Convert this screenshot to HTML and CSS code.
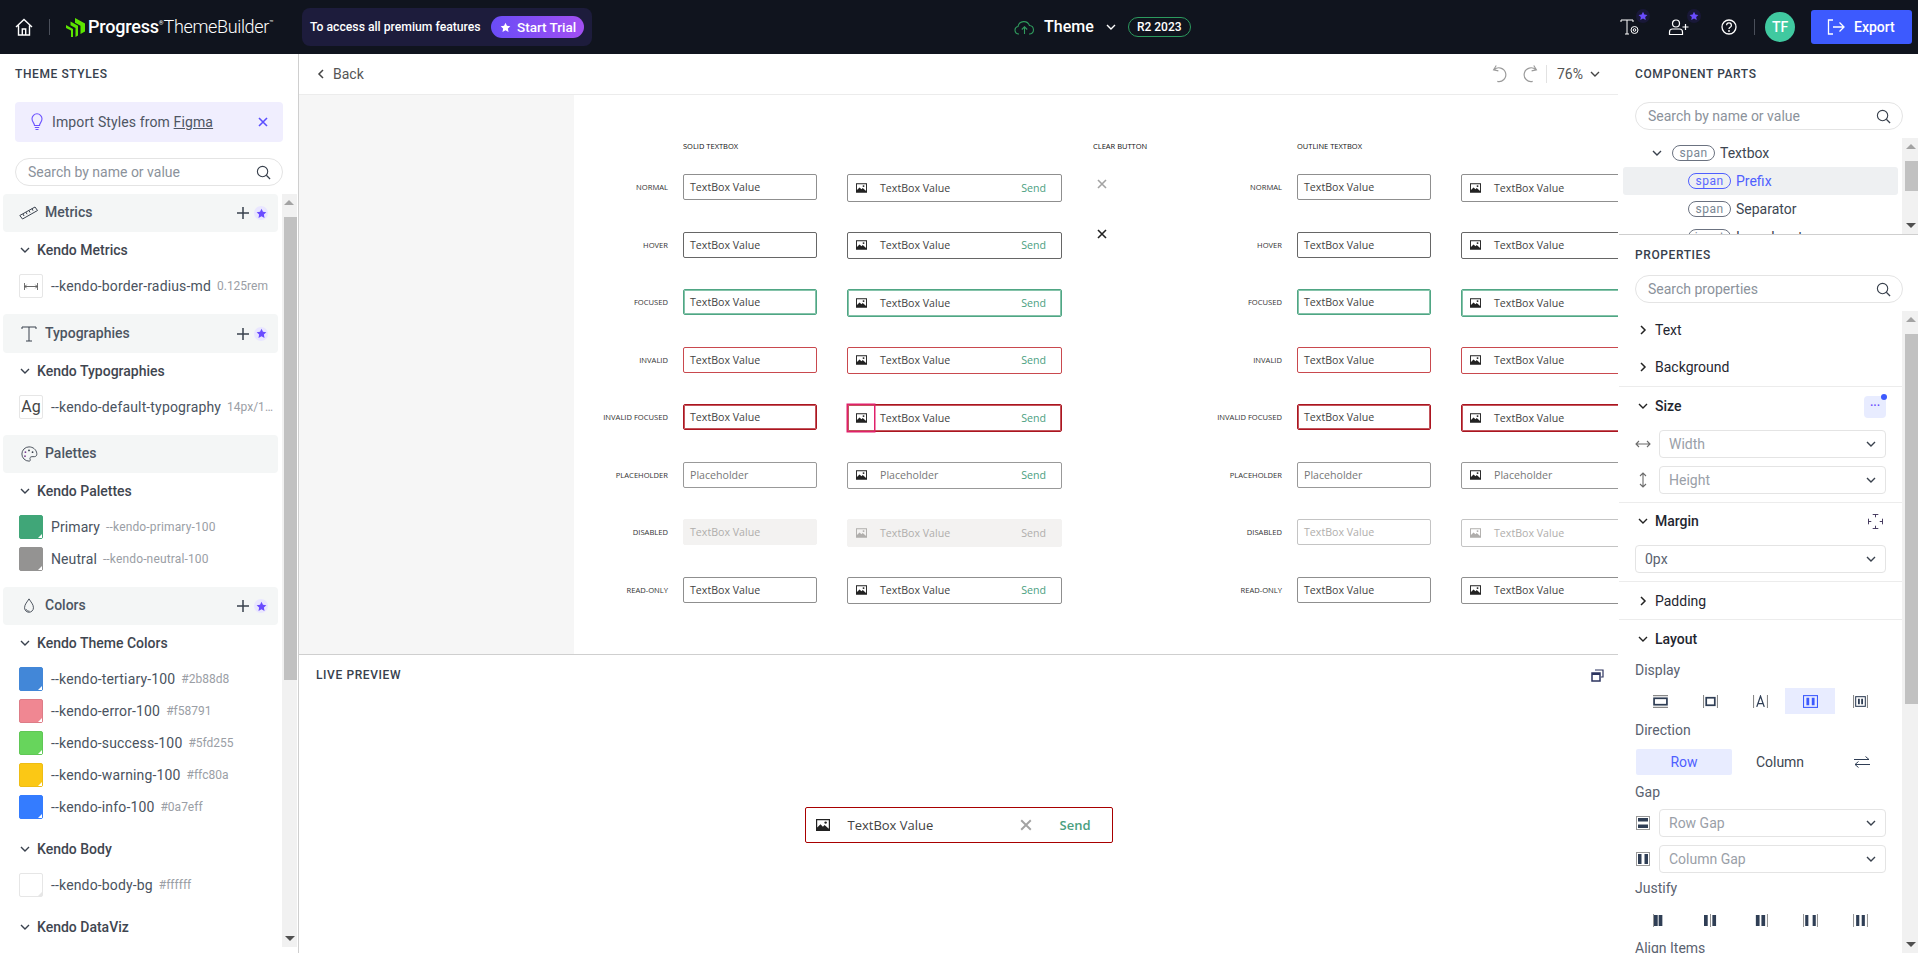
FILE: index.html
```html
<!DOCTYPE html>
<html lang="en">
<head>
<meta charset="utf-8">
<title>Progress ThemeBuilder</title>
<link rel="stylesheet" href="styles.css">
</head>
<body>
<svg class="defs" aria-hidden="true">
  <symbol id="i-img" viewBox="0 0 14 12"><path fill="currentColor" fill-rule="evenodd" d="M0 0h14v12H0zM1.2 1.2v7.3l3.3-3.2 2.4 2.4 1.7-1.6 4.2 3.6V1.2z"/><circle cx="9.6" cy="3.6" r="1.2" fill="currentColor"/></symbol>
  <symbol id="i-x" viewBox="0 0 10 10"><path d="M1 1l8 8M9 1L1 9" fill="none" stroke="currentColor" stroke-width="1.6"/></symbol>
  <symbol id="i-search" viewBox="0 0 16 16"><circle cx="7" cy="7" r="5.5" fill="none" stroke="currentColor" stroke-width="1.2"/><path d="M11 11l4 4" stroke="currentColor" stroke-width="1.4"/></symbol>
  <symbol id="i-down" viewBox="0 0 12 12"><path d="M2 4l4 4 4-4" fill="none" stroke="currentColor" stroke-width="1.4"/></symbol>
  <symbol id="i-right" viewBox="0 0 12 12"><path d="M4 2l4 4-4 4" fill="none" stroke="currentColor" stroke-width="1.5"/></symbol>
  <symbol id="i-star" viewBox="0 0 12 12"><path fill="currentColor" d="M6 .8l1.6 3.4 3.7.5-2.7 2.5.7 3.7L6 9.1l-3.3 1.8.7-3.7L.7 4.7l3.7-.5z"/></symbol>
  <symbol id="i-plus" viewBox="0 0 14 14"><path d="M7 1v12M1 7h12" stroke="currentColor" stroke-width="1.5"/></symbol>
</svg>

<header class="topbar">
  <div class="brand">
    <svg class="home" viewBox="0 0 18 18"><path d="M1 9l8-7.5L17 9M3.5 7.5V17h11V7.5M7.3 17v-6h3.4v6" fill="none" stroke="#fff" stroke-width="1.4"/></svg>
    <span class="brand-rule"></span>
    <svg class="logo" viewBox="0 0 19 19"><path fill="#5ce500" d="M9 0l10 5.500v8L14.500 16V7.800L9 4.700zM4.500 3.500l7.500 4.300v9.700L9.500 19v-9L4.500 7.200zM0 7l7 4v8l-2 0V12.500L0 10z"/></svg>
    <span class="brand-progress">Progress</span><span class="brand-reg">®</span><span class="brand-name">ThemeBuilder</span><span class="brand-tm">™</span>
  </div>
  <div class="trial">
    <span>To access all premium features</span>
    <span class="trial-btn"><svg class="trial-star"><use href="#i-star"/></svg>Start Trial</span>
  </div>
  <div class="theme">
    <svg class="cloud" viewBox="0 0 21 15"><path d="M5 14H4.500A3.800 3.800 0 0 1 4 6.500 6 6 0 0 1 15.500 5.500 4.300 4.300 0 0 1 16 14h-1M10.500 14V7M7.800 9.500l2.700-2.700 2.700 2.700" fill="none" stroke="#2f9a5d" stroke-width="1.1"/></svg>
    <span class="theme-name">Theme</span>
    <svg class="theme-chev"><use href="#i-down"/></svg>
    <span class="release">R2 2023</span>
  </div>
  <div class="top-actions">
    <span class="top-icon top-font">
      <svg class="ti-font" viewBox="0 0 20 16"><path d="M1 3V1h12v2M7 1v14M5 15h4" fill="none" stroke="#fff" stroke-width="1"/><circle cx="14.500" cy="11" r="3.500" fill="none" stroke="#fff" stroke-width="1"/><circle cx="14.500" cy="11" r="1.300" fill="none" stroke="#fff" stroke-width="1"/></svg>
      <span class="top-badge"><svg><use href="#i-star"/></svg></span>
    </span>
    <span class="top-icon top-user">
      <svg class="ti-user" viewBox="0 0 22 16"><circle cx="8" cy="4.500" r="3.500" fill="none" stroke="#fff" stroke-width="1.200"/><path d="M1.500 15.500v-2.500q0-3 3-3h7q3 0 3 3v2.500zM17.500 5v6M14.500 8h6" fill="none" stroke="#fff" stroke-width="1.200"/></svg>
      <span class="top-badge"><svg><use href="#i-star"/></svg></span>
    </span>
    <svg class="ti-help" viewBox="0 0 16 16"><circle cx="8" cy="8" r="7" fill="none" stroke="#fff" stroke-width="1.300"/><path d="M5.600 6.200a2.400 2.400 0 1 1 3.600 2.100c-.8.500-1.200.9-1.200 1.700" fill="none" stroke="#fff" stroke-width="1.300"/><circle cx="8" cy="12" r=".9" fill="#fff"/></svg>
    <span class="top-rule"></span>
    <span class="avatar">TF</span>
    <span class="export">
      <svg class="export-ico" viewBox="0 0 18 16"><path d="M6 1H1.500v14H6M6 8h11M12.500 3.500L17 8l-4.500 4.500" fill="none" stroke="#fff" stroke-width="1.300"/></svg>
      Export
    </span>
  </div>
</header>

<div class="workspace">
  <aside class="left">
    <h2 class="panel-title">THEME STYLES</h2>
    <div class="import">
      <svg class="bulb" viewBox="0 0 12 18"><path d="M3.500 12.500C3.500 10 1 9 1 5.800a5 5 0 0 1 10 0c0 3.200-2.500 4.200-2.500 6.700zM3.800 14.500h4.400M4.500 16.500h3" fill="none" stroke="#6b52ff" stroke-width="1.100"/></svg>
      <span class="import-text">Import Styles from <u>Figma</u></span>
      <svg class="import-x"><use href="#i-x"/></svg>
    </div>
    <div class="search left-search"><span>Search by name or value</span><svg><use href="#i-search"/></svg></div>
    <div class="left-scroll">
      <div class="left-list">
        <div class="head">
          <svg class="head-ico" viewBox="0 0 20 14"><g fill="none" stroke="#39414d" stroke-width="1"><path d="M.8 9.500L16 1l2.500 3.500L3.500 13z"/><path d="M4 8l1 2M7 6.200l1 2M10 4.500l1 2M13 2.700l1 2"/></g></svg>
          <span class="head-text">Metrics</span>
          <svg class="head-plus"><use href="#i-plus"/></svg>
          <span class="head-star"><svg><use href="#i-star"/></svg></span>
        </div>
        <div class="group"><svg><use href="#i-down"/></svg>Kendo Metrics</div>
        <div class="item"><span class="tile"><svg class="tile-ico" viewBox="0 0 16 8"><path d="M.5 0v8M15.500 0v8M1 4h14M3 2L1 4l2 2M13 2l2 2-2 2" fill="none" stroke="#555" stroke-width="1"/></svg></span><span class="item-name">--kendo-border-radius-md</span><span class="item-val">0.125rem</span></div>

        <div class="head head-typo">
          <svg class="head-ico" viewBox="0 0 20 16"><path d="M3 3V1h14v2M10 1v14M7 15h6" fill="none" stroke="#39414d" stroke-width="1"/></svg>
          <span class="head-text">Typographies</span>
          <svg class="head-plus"><use href="#i-plus"/></svg>
          <span class="head-star"><svg><use href="#i-star"/></svg></span>
        </div>
        <div class="group"><svg><use href="#i-down"/></svg>Kendo Typographies</div>
        <div class="item"><span class="tile tile-ag">Ag</span><span class="item-name">--kendo-default-typography</span><span class="item-val item-val-cut">14px/1.5</span></div>

        <div class="head">
          <svg class="head-ico" viewBox="0 0 20 18"><path d="M10 1a8 8 0 1 0 0 16c1.500 0 1.800-1 1.300-2-.7-1.300 0-3 2-3H16c2 0 3-1.500 2.800-3.500C18.300 4 14.500 1 10 1z" fill="none" stroke="#39414d" stroke-width="1"/><circle cx="6" cy="7" r="1" fill="#7a3f8f"/><circle cx="10" cy="5" r="1" fill="#39414d"/><circle cx="14" cy="7" r="1" fill="#39414d"/><circle cx="5.500" cy="11.500" r="1" fill="#7a3f8f"/></svg>
          <span class="head-text">Palettes</span>
        </div>
        <div class="group"><svg><use href="#i-down"/></svg>Kendo Palettes</div>
        <div class="item"><span class="tile sw sw-primary"></span><span class="pal-name">Primary</span><span class="pal-var">--kendo-primary-100</span></div>
        <div class="item item-next"><span class="tile sw sw-neutral"></span><span class="pal-name">Neutral</span><span class="pal-var">--kendo-neutral-100</span></div>

        <div class="head">
          <svg class="head-ico" viewBox="0 0 20 18"><path d="M10 1c-2 3.500-5 6-5 10a5 5 0 0 0 10 0c0-4-3-6.500-5-10zM6.500 12.500c1 2 2.500 2.300 4 2.300" fill="none" stroke="#39414d" stroke-width="1"/></svg>
          <span class="head-text">Colors</span>
          <svg class="head-plus"><use href="#i-plus"/></svg>
          <span class="head-star"><svg><use href="#i-star"/></svg></span>
        </div>
        <div class="group"><svg><use href="#i-down"/></svg>Kendo Theme Colors</div>
        <div class="item"><span class="tile sw sw-tertiary"></span><span class="item-name">--kendo-tertiary-100</span><span class="item-val">#2b88d8</span></div>
        <div class="item item-next"><span class="tile sw sw-error"></span><span class="item-name">--kendo-error-100</span><span class="item-val">#f58791</span></div>
        <div class="item item-next"><span class="tile sw sw-success"></span><span class="item-name">--kendo-success-100</span><span class="item-val">#5fd255</span></div>
        <div class="item item-next"><span class="tile sw sw-warning"></span><span class="item-name">--kendo-warning-100</span><span class="item-val">#ffc80a</span></div>
        <div class="item item-next"><span class="tile sw sw-info"></span><span class="item-name">--kendo-info-100</span><span class="item-val">#0a7eff</span></div>
        <div class="group group-next"><svg><use href="#i-down"/></svg>Kendo Body</div>
        <div class="item"><span class="tile sw sw-body"></span><span class="item-name">--kendo-body-bg</span><span class="item-val">#ffffff</span></div>
        <div class="group group-next"><svg><use href="#i-down"/></svg>Kendo DataViz</div>
      </div>
      <div class="sb sb-left">
        <span class="sb-up"></span><span class="sb-thumb sb-thumb-left"></span><span class="sb-down"></span>
      </div>
    </div>
  </aside>

  <main class="center">
    <div class="toolbar">
      <span class="back"><svg><use href="#i-right"/></svg>Back</span>
      <svg class="hist" viewBox="0 0 16 18"><path d="M4 1L1.500 5 6 6M2 5a6.500 6.500 0 1 1 3 11" fill="none" stroke="#9a9a9a" stroke-width="1.100"/></svg>
      <svg class="hist hist-redo" viewBox="0 0 16 18"><path d="M12 1l2.500 4L10 6M14 5a6.500 6.500 0 1 0-3 11" fill="none" stroke="#9a9a9a" stroke-width="1.100"/></svg>
      <span class="tool-rule"></span>
      <span class="zoom">76%</span>
      <svg class="zoom-chev"><use href="#i-down"/></svg>
    </div>
    <div class="canvas">
      <div class="canvas-side"></div>
      <div class="sheet">
        <div class="sheet-head">
          <span class="sh-solid">SOLID TEXTBOX</span><span class="sh-clear">CLEAR BUTTON</span><span>OUTLINE TEXTBOX</span>
        </div>

        <div class="row">
          <span class="lab">NORMAL</span>
          <span class="tb tb-1">TextBox Value</span>
          <span class="tb tb-2"><span class="pre"><svg><use href="#i-img"/></svg></span><span>TextBox Value</span><span class="send">Send</span></span>
          <span class="clear"><svg class="clear-x clear-soft"><use href="#i-x"/></svg></span>
          <span class="lab lab-2">NORMAL</span>
          <span class="tb tb-1">TextBox Value</span>
          <span class="tb tb-2"><span class="pre"><svg><use href="#i-img"/></svg></span><span>TextBox Value</span><span class="send">Send</span></span>
        </div>
        <div class="row">
          <span class="lab">HOVER</span>
          <span class="tb tb-1 s-hover">TextBox Value</span>
          <span class="tb tb-2 s-hover"><span class="pre"><svg><use href="#i-img"/></svg></span><span>TextBox Value</span><span class="send">Send</span></span>
          <span class="clear"><svg class="clear-x clear-dark"><use href="#i-x"/></svg></span>
          <span class="lab lab-2">HOVER</span>
          <span class="tb tb-1 s-hover">TextBox Value</span>
          <span class="tb tb-2 s-hover"><span class="pre"><svg><use href="#i-img"/></svg></span><span>TextBox Value</span><span class="send">Send</span></span>
        </div>
        <div class="row">
          <span class="lab">FOCUSED</span>
          <span class="tb tb-1 s-focus">TextBox Value</span>
          <span class="tb tb-2 s-focus"><span class="pre"><svg><use href="#i-img"/></svg></span><span>TextBox Value</span><span class="send">Send</span></span>
          <span class="clear"></span>
          <span class="lab lab-2">FOCUSED</span>
          <span class="tb tb-1 s-focus">TextBox Value</span>
          <span class="tb tb-2 s-focus"><span class="pre"><svg><use href="#i-img"/></svg></span><span>TextBox Value</span><span class="send">Send</span></span>
        </div>
        <div class="row">
          <span class="lab">INVALID</span>
          <span class="tb tb-1 s-invalid">TextBox Value</span>
          <span class="tb tb-2 s-invalid"><span class="pre"><svg><use href="#i-img"/></svg></span><span>TextBox Value</span><span class="send">Send</span></span>
          <span class="clear"></span>
          <span class="lab lab-2">INVALID</span>
          <span class="tb tb-1 s-invalid">TextBox Value</span>
          <span class="tb tb-2 s-invalid"><span class="pre"><svg><use href="#i-img"/></svg></span><span>TextBox Value</span><span class="send">Send</span></span>
        </div>
        <div class="row">
          <span class="lab">INVALID FOCUSED</span>
          <span class="tb tb-1 s-invfocus">TextBox Value</span>
          <span class="tb tb-2 s-invfocus"><span class="pre pre-hit"><svg><use href="#i-img"/></svg></span><span>TextBox Value</span><span class="send">Send</span></span>
          <span class="clear"></span>
          <span class="lab lab-2">INVALID FOCUSED</span>
          <span class="tb tb-1 s-invfocus">TextBox Value</span>
          <span class="tb tb-2 s-invfocus"><span class="pre"><svg><use href="#i-img"/></svg></span><span>TextBox Value</span><span class="send">Send</span></span>
        </div>
        <div class="row">
          <span class="lab">PLACEHOLDER</span>
          <span class="tb tb-1 s-ph">Placeholder</span>
          <span class="tb tb-2 s-ph"><span class="pre"><svg><use href="#i-img"/></svg></span><span>Placeholder</span><span class="send">Send</span></span>
          <span class="clear"></span>
          <span class="lab lab-2">PLACEHOLDER</span>
          <span class="tb tb-1 s-ph">Placeholder</span>
          <span class="tb tb-2 s-ph"><span class="pre"><svg><use href="#i-img"/></svg></span><span>Placeholder</span><span class="send">Send</span></span>
        </div>
        <div class="row">
          <span class="lab">DISABLED</span>
          <span class="tb tb-1 s-disabled">TextBox Value</span>
          <span class="tb tb-2 s-disabled"><span class="pre"><svg><use href="#i-img"/></svg></span><span>TextBox Value</span><span class="send">Send</span></span>
          <span class="clear"></span>
          <span class="lab lab-2">DISABLED</span>
          <span class="tb tb-1 s-disabled-o">TextBox Value</span>
          <span class="tb tb-2 s-disabled-o"><span class="pre"><svg><use href="#i-img"/></svg></span><span>TextBox Value</span><span class="send">Send</span></span>
        </div>
        <div class="row">
          <span class="lab">READ-ONLY</span>
          <span class="tb tb-1">TextBox Value</span>
          <span class="tb tb-2"><span class="pre"><svg><use href="#i-img"/></svg></span><span>TextBox Value</span><span class="send">Send</span></span>
          <span class="clear"></span>
          <span class="lab lab-2">READ-ONLY</span>
          <span class="tb tb-1">TextBox Value</span>
          <span class="tb tb-2"><span class="pre"><svg><use href="#i-img"/></svg></span><span>TextBox Value</span><span class="send">Send</span></span>
        </div>
      </div>
    </div>
    <section class="live">
      <div class="live-head">
        <span class="live-title">LIVE PREVIEW</span>
        <svg class="live-ico" viewBox="0 0 13 13"><path d="M4 1h8v7h-2" fill="none" stroke="#2d3560" stroke-width="1.200"/><rect x="1" y="4" width="8" height="8" fill="none" stroke="#2d3560" stroke-width="1.500"/><path d="M1 5h8" stroke="#2d3560" stroke-width="2"/></svg>
      </div>
      <div class="live-body">
        <div class="live-box">
          <svg class="live-img"><use href="#i-img"/></svg>
          <span class="live-text">TextBox Value</span>
          <svg class="live-x"><use href="#i-x"/></svg>
          <span class="live-send">Send</span>
        </div>
      </div>
    </section>
  </main>

  <aside class="right">
    <section class="parts">
      <h2 class="panel-title panel-title-r">COMPONENT PARTS</h2>
      <div class="search right-search"><span>Search by name or value</span><svg><use href="#i-search"/></svg></div>
      <div class="tree-wrap">
        <div class="tree">
          <div class="tree-row tree-root"><svg class="tree-chev"><use href="#i-down"/></svg><span class="pill">span</span>Textbox</div>
          <div class="tree-row tree-sel"><span class="pill pill-sel">span</span>Prefix</div>
          <div class="tree-row tree-child"><span class="pill">span</span>Separator</div>
          <div class="tree-row tree-child"><span class="pill">input</span>Inner Input</div>
        </div>
        <div class="sb sb-right">
          <span class="sb-up"></span><span class="sb-thumb sb-thumb-tree"></span><span class="sb-down"></span>
        </div>
      </div>
    </section>
    <section class="props">
      <h2 class="panel-title props-title">PROPERTIES</h2>
      <div class="search right-search"><span>Search properties</span><svg><use href="#i-search"/></svg></div>
      <div class="props-wrap">
        <div class="props-list">
          <div class="p-head p-head-first"><svg><use href="#i-right"/></svg>Text</div>
          <div class="p-head p-rule"><svg><use href="#i-right"/></svg>Background</div>

          <div class="p-head"><svg><use href="#i-down"/></svg>Size<span class="more">···<i class="more-dot"></i></span></div>
          <div class="field field-first">
            <svg class="f-ico f-ico-w" viewBox="0 0 16 8"><path d="M1 4h14M4 1L1 4l3 3M12 1l3 3-3 3" fill="none" stroke="#6b6b6b" stroke-width="1.100"/></svg>
            <span class="select select-ph">Width<svg><use href="#i-down"/></svg></span>
          </div>
          <div class="field field-next">
            <svg class="f-ico f-ico-h" viewBox="0 0 8 16"><path d="M4 1v14M1 4l3-3 3 3M1 12l3 3 3-3" fill="none" stroke="#6b6b6b" stroke-width="1.100"/></svg>
            <span class="select select-ph">Height<svg><use href="#i-down"/></svg></span>
          </div>
          <div class="p-rule p-rule-gap"></div>

          <div class="p-head p-head-m"><svg><use href="#i-down"/></svg>Margin
            <svg class="margin-ico" viewBox="0 0 16 16"><path d="M5 .5h6M8 .5v3M5 15.500h6M8 15.500v-3M.5 5v6M.5 8h3M15.500 5v6M15.500 8h-3" fill="none" stroke="#3b2f55" stroke-width="1"/></svg>
          </div>
          <div class="field field-full">
            <span class="select">0px<svg><use href="#i-down"/></svg></span>
          </div>
          <div class="p-rule p-rule-gap"></div>

          <div class="p-head p-head-pad p-rule"><svg><use href="#i-right"/></svg>Padding</div>
          <div class="p-head"><svg><use href="#i-down"/></svg>Layout</div>

          <div class="p-label p-label-display">Display</div>
          <div class="opts opts-display">
            <span class="opt"><svg viewBox="0 0 14 12"><path d="M0 .5h14M0 11.500h14" stroke="#888" fill="none"/><rect x="1" y="3" width="12" height="6" fill="none" stroke="#2f3e55" stroke-width="1.600"/></svg></span>
            <span class="opt"><svg viewBox="0 0 14 12"><path d="M.5 0v12M13.500 0v12" stroke="#888" fill="none"/><rect x="3" y="2.500" width="8" height="7" fill="none" stroke="#2f3e55" stroke-width="1.600"/></svg></span>
            <span class="opt"><svg viewBox="0 0 14 12"><path d="M.5 0v12M13.500 0v12" stroke="#888" fill="none"/><path d="M3.500 11L7 1l3.500 10M4.700 8h4.600" stroke="#2f3e55" fill="none" stroke-width="1.200"/></svg></span>
            <span class="opt opt-on"><svg viewBox="0 0 14 12"><rect x=".5" y=".5" width="13" height="11" fill="none" stroke="#3d5afe"/><path d="M4.500 2.500v7M9.500 2.500v7" stroke="#3d5afe" stroke-width="2.600"/></svg></span>
            <span class="opt"><svg viewBox="0 0 14 12"><path d="M.5 0v12M13.500 0v12" stroke="#888" fill="none"/><rect x="2.500" y="1.500" width="9" height="9" fill="none" stroke="#2f3e55"/><path d="M5.500 3.500v5M8.500 3.500v5" stroke="#2f3e55" stroke-width="1.700"/></svg></span>
          </div>
          <div class="p-label p-label-dir">Direction</div>
          <div class="dir">
            <span class="dir-btn dir-on">Row</span>
            <span class="dir-btn">Column</span>
            <svg class="dir-swap" viewBox="0 0 16 12"><path d="M0 3.500h15M11.500 .5l3.500 3M16 8.500H1M4.500 5.500L1 8.500l3.500 3" fill="none" stroke="#2f3e55" stroke-width="1"/></svg>
          </div>
          <div class="p-label p-label-gap">Gap</div>
          <div class="field field-gap">
            <svg class="f-ico f-ico-g" viewBox="0 0 14 14"><rect x=".5" y=".5" width="13" height="13" fill="none" stroke="#999"/><rect x="2" y="2" width="10" height="3.500" fill="#2f3e55"/><rect x="2" y="8.500" width="10" height="3.500" fill="#2f3e55"/></svg>
            <span class="select select-ph">Row Gap<svg><use href="#i-down"/></svg></span>
          </div>
          <div class="field field-next">
            <svg class="f-ico f-ico-g" viewBox="0 0 14 14"><rect x=".5" y=".5" width="13" height="13" fill="none" stroke="#999"/><rect x="2" y="2" width="3.500" height="10" fill="#2f3e55"/><rect x="8.500" y="2" width="3.500" height="10" fill="#2f3e55"/></svg>
            <span class="select select-ph">Column Gap<svg><use href="#i-down"/></svg></span>
          </div>
          <div class="p-label p-label-just">Justify</div>
          <div class="opts opts-just">
            <span class="opt"><svg viewBox="0 0 16 14"><path d="M.5 0v14" stroke="#888"/><path d="M3 1v12M8 1v12" stroke="#2f3e55" stroke-width="4"/></svg></span>
            <span class="opt"><svg viewBox="0 0 16 14"><path d="M8 0v14" stroke="#888"/><path d="M3 1v12M12 1v12" stroke="#2f3e55" stroke-width="4"/></svg></span>
            <span class="opt"><svg viewBox="0 0 16 14"><path d="M15.500 0v14" stroke="#888"/><path d="M5 1v12M11 1v12" stroke="#2f3e55" stroke-width="4"/></svg></span>
            <span class="opt"><svg viewBox="0 0 16 14"><path d="M.5 0v14M15.500 0v14" stroke="#888"/><path d="M4 1v12M12 1v12" stroke="#2f3e55" stroke-width="3.400"/></svg></span>
            <span class="opt"><svg viewBox="0 0 16 14"><path d="M.5 0v14M15.500 0v14" stroke="#888"/><path d="M5 1v12M11 1v12" stroke="#2f3e55" stroke-width="3.400"/></svg></span>
          </div>
          <div class="p-label p-label-align">Align Items</div>
        </div>
        <div class="sb sb-right">
          <span class="sb-up"></span><span class="sb-thumb sb-thumb-props"></span><span class="sb-down"></span>
        </div>
      </div>
    </section>
  </aside>
</div>
</body>
</html>
```

FILE: styles.css
```css
* { box-sizing: border-box; }
html, body { margin: 0; height: 100%; }
body {
  display: flex; flex-direction: column; height: 953px; overflow: hidden;
  font: 14px/20px Roboto, "Liberation Sans", sans-serif; color: #424b57; background: #fff;
}
svg { display: block; flex: none; }
.defs { width: 0; height: 0; position: absolute; }

/* top bar */
.topbar { height: 54px; flex: none; display: flex; align-items: center; background: #10141e; color: #fff; }
.brand { width: 302px; flex: none; display: flex; align-items: center; padding-left: 15px; }
.home { width: 18px; height: 18px; }
.brand-rule { width: 1px; height: 16px; margin-left: 16px; background: #4a4f5a; }
.logo { width: 19px; height: 19px; margin-left: 16px; }
.brand-progress { margin-left: 3px; font-size: 18px; font-weight: 500; letter-spacing: -.2px; }
.brand-reg { font-size: 6px; margin: -8px 0 0 0; }
.brand-name { font-size: 18px; font-weight: 300; letter-spacing: -.35px; }
.brand-tm { font-size: 7px; margin-top: -9px; }
.trial {
  width: 290px; height: 38px; flex: none; display: flex; align-items: center; justify-content: space-between;
  padding: 0 8px; background: #1d1c3c; border-radius: 8px; font-size: 12.2px; font-weight: 500;
}
.trial-btn {
  width: 93px; height: 22px; display: flex; align-items: center; padding-left: 9px; border-radius: 11px;
  background: linear-gradient(90deg, #6a4cf6, #a24ff2); font-size: 13.5px;
}
.trial-star { width: 11px; height: 11px; margin-right: 6px; color: #fff; }
.theme { flex: none; display: flex; align-items: center; margin-left: 422px; }
.cloud { width: 21px; height: 15px; }
.theme-name { margin-left: 9px; font-size: 16px; font-weight: 500; }
.theme-chev { width: 12px; height: 12px; margin-left: 11px; color: #fff; }
.release {
  margin-left: 11px; width: 63px; height: 20px; border: 1px solid #2c9a5e; border-radius: 10px;
  font-size: 12px; line-height: 18px; font-weight: 500; text-align: center;
}
.top-actions { margin-left: auto; display: flex; align-items: center; padding-right: 6px; }
.top-icon { position: relative; display: block; }
.top-badge { position: absolute; top: -10px; width: 14px; height: 14px; border-radius: 7px; background: #191838; display: flex; align-items: center; justify-content: center; color: #6a4cff; }
.top-badge svg { width: 10px; height: 10px; }
.top-font .top-badge { left: 16px; }
.top-user .top-badge { left: 19px; }
.ti-font { width: 20px; height: 16px; }
.top-user { margin-left: 28px; }
.ti-user { width: 22px; height: 16px; }
.ti-help { width: 16px; height: 16px; margin-left: 31px; }
.top-rule { width: 1px; height: 16px; margin-left: 17px; background: #4a4f5a; }
.avatar { width: 30px; height: 30px; margin-left: 10px; border-radius: 50%; background: #40c9a0; font-size: 14px; font-weight: 500; line-height: 30px; text-align: center; }
.export {
  width: 101px; height: 34px; margin-left: 16px; display: flex; align-items: center; padding-left: 16px;
  background: #3d5afe; border-radius: 3px; font-size: 14px; font-weight: 500;
}
.export-ico { width: 18px; height: 16px; margin-right: 9px; }

/* layout */
.workspace { flex: 1; min-height: 0; display: flex; }
.left { width: 299px; flex: none; display: flex; flex-direction: column; border-right: 1px solid #cfcfcf; }
.center { width: 1319px; flex: none; display: flex; flex-direction: column; overflow: hidden; }
.right { width: 300px; flex: none; display: flex; flex-direction: column; background: #fff; }

.panel-title { margin: 0; height: 48px; padding: 12px 0 0 15px; font-size: 12px; line-height: 16px; font-weight: 500; letter-spacing: .6px; color: #37404c; }
.search {
  height: 28px; display: flex; align-items: center; justify-content: space-between; padding: 0 11px 0 12px;
  border: 1px solid #e4e4e4; border-radius: 14px; color: #8b929b; font-size: 14px;
}
.search svg { width: 15px; height: 15px; color: #39414d; }

/* left */
.import { height: 40px; margin: 0 15px 16px; width: 268px; display: flex; align-items: center; padding-left: 16px; background: #f0eefe; border-radius: 4px; color: #4e5563; }
.bulb { width: 12px; height: 18px; }
.import-text { margin-left: 9px; letter-spacing: .12px; }
.import-x { width: 10px; height: 10px; margin-left: auto; margin-right: 15px; color: #5b4eff; }
.left-search { margin: 0 15px 8px; width: 268px; }
.left-scroll { height: 753px; display: flex; }
.left-list { width: 282px; flex: none; overflow: hidden; }
.head { height: 38px; width: 275px; margin-left: 3px; display: flex; align-items: center; padding: 0 10px 0 16px; background: #f4f6f6; border-radius: 4px; }
.head-typo { height: 39px; }
.head-ico { width: 20px; height: 16px; }
.head-text { margin-left: 6px; font-weight: 500; color: #4c5562; margin-top: -2px; }
.head-plus { width: 14px; height: 14px; margin-left: auto; color: #39414d; }
.head-star { width: 14px; height: 14px; margin-left: 4px; border-radius: 50%; background: #e9e6ff; display: flex; align-items: center; justify-content: center; color: #6a4cff; }
.head-star svg { width: 11px; height: 11px; }
.group { height: 36px; display: flex; align-items: center; padding-left: 19px; font-weight: 500; color: #3f4650; }
.group svg { width: 12px; height: 12px; margin-right: 6px; color: #39414d; }
.group-next { margin-top: 12px; }
.item { height: 24px; margin: 6px 0 16px; display: flex; align-items: center; padding-left: 19px; white-space: nowrap; }
.item:has(+ .item-next) { margin-bottom: 8px; }
.item-next { margin-top: 0; }
.item:has(+ .group-next) { margin-bottom: 0; }
.tile { width: 24px; height: 24px; flex: none; position: relative; border: 1px solid #e6e6e6; border-radius: 2px; display: flex; align-items: center; justify-content: center; }
.tile-ico { width: 14px; height: 7px; }
.tile-ag { font-size: 16px; color: #444; }
.sw::after { content: ""; position: absolute; right: 0; bottom: 0; border: 2.5px solid transparent; border-right-color: #fff; border-bottom-color: #fff; }
.sw-primary { background: #40a678; border-color: #40a678; }
.sw-neutral { background: #949392; border-color: #949392; }
.sw-tertiary { background: #4287d8; border-color: #4287d8; }
.sw-error { background: #f08792; border-color: #dd7c87; }
.sw-success { background: #67d55c; border-color: #60c756; }
.sw-warning { background: #fbc815; border-color: #eebd14; }
.sw-info { background: #347cff; border-color: #347cff; }
.sw-body { background: #fff; }
.sw-body::after { border-right-color: #e6e6e6; border-bottom-color: #e6e6e6; }
.item-name { margin-left: 8px; color: #4a5360; letter-spacing: .15px; }
.item-val { margin-left: 6px; font-size: 12px; color: #9a9ea5; }
.item-val-cut { width: 46px; overflow: hidden; text-overflow: ellipsis; }
.pal-name { margin-left: 8px; color: #4a5360; letter-spacing: .1px; }
.pal-var { margin-left: 6px; font-size: 12px; color: #9a9ea5; letter-spacing: .15px; }

/* scrollbars */
.sb { width: 15px; flex: none; display: flex; flex-direction: column; align-items: flex-end; background: #f1f1f1; position: relative; }
.sb-thumb { width: 13px; background: #c1c1c1; margin-top: 12px; }
.sb-up { width: 0; height: 0; margin: 6px 3px 0 0; border: 5px solid transparent; border-top: 0; border-bottom-color: #a3a3a3; }
.sb-down { width: 0; height: 0; margin: auto 2px 6px 0; border: 5px solid transparent; border-bottom: 0; border-top-color: #505050; }
.sb-left { height: 753px; }
.sb-thumb-left { height: 463px; }
.sb-right { width: 16px; height: 100%; }
.sb-right .sb-up { margin-right: 2px; }
.sb-thumb-tree { height: 30px; }
.sb-thumb-props { height: 370px; }

/* center */
.toolbar { height: 41px; flex: none; display: flex; align-items: center; padding-left: 16px; border-bottom: 1px solid #ececec; color: #555; }
.back { display: flex; align-items: center; margin-right: auto; }
.back svg { width: 12px; height: 12px; transform: scaleX(-1); margin-right: 6px; color: #444; }
.hist { width: 17px; height: 20px; }
.hist-redo { margin-left: 12px; }
.tool-rule { width: 1px; height: 18px; margin-left: 8px; background: #e2e2e2; }
.zoom { margin-left: 10px; }
.zoom-chev { width: 12px; height: 12px; margin: 0 17px 0 6px; color: #444; }

.canvas { height: 560px; flex: none; display: flex; border-bottom: 1px solid #cfcfcf; }
.canvas-side { width: 275px; flex: none; background: #f6f6f6; }
.sheet { flex: 1; min-width: 0; overflow: hidden; font-family: "Open Sans", "Liberation Sans", sans-serif; color: #424242; font-size: 10.64px; }
.sheet-head { height: 79px; padding: 44px 0 0 109px; display: flex; font-size: 7.5px; line-height: 14px; font-weight: 400; color: #111; white-space: nowrap; }
.sh-solid { width: 410px; flex: none; }
.sh-clear { width: 204px; flex: none; }
.row { height: 57.5px; display: flex; align-items: flex-start; white-space: nowrap; }
.lab { width: 94px; flex: none; text-align: right; font-size: 7.6px; line-height: 27px; color: #333; }
.lab-2 { width: 135px; }
.tb { flex: none; display: flex; align-items: center; margin-left: 15px; background: #fff; border: 1px solid #8f8f8f; border-radius: 2px; }
.tb-1 { width: 134px; height: 26px; padding-left: 6px; }
.tb-2 { width: 215px; height: 27.5px; margin-left: 30px; padding-right: 15px; }
.pre { width: 26px; align-self: stretch; display: flex; align-items: center; justify-content: center; color: #222; margin-right: 6px; }
.pre svg { width: 11px; height: 10px; }
.pre-hit { box-shadow: 0 0 0 1.5px #e0206a; position: relative; }
.send { margin-left: auto; color: #4aa07f; }
.clear { width: 85px; flex: none; }
.clear-x { width: 10px; height: 10px; margin-left: 35px; }
.clear-soft { margin-top: 5px; color: #a3a3a3; }
.clear-dark { margin-top: -3px; color: #222; }
.s-hover { border-color: #666; }
.s-focus { border-color: #4fa684; box-shadow: inset 0 0 0 1px #85c3aa; }
.s-invalid { border-color: #c9494e; }
.s-invfocus { border-color: #ab1520; box-shadow: inset 0 0 0 1px #c3555c; }
.s-ph { border-color: #999; color: #777; }
.s-disabled { background: #f3f2f1; border-color: #f3f2f1; color: #b0aeac; }
.s-disabled .pre, .s-disabled .send { color: #b0aeac; }
.s-disabled-o { border-color: #c4c4c4; color: #b0aeac; }
.s-disabled-o .pre, .s-disabled-o .send { color: #b0aeac; }

.live { flex: 1; min-height: 0; display: flex; flex-direction: column; }
.live-head { height: 42px; flex: none; display: flex; align-items: center; justify-content: space-between; padding: 0 14px 2px 17px; }
.live-title { font-size: 12px; font-weight: 500; letter-spacing: .6px; color: #37404c; }
.live-ico { width: 13px; height: 13px; }
.live-body { flex: 1; display: flex; align-items: center; justify-content: center; }
.live-box {
  width: 308px; height: 36px; display: flex; align-items: center; padding: 0 21px 0 10px;
  border: 1px solid #a80000; border-radius: 2px; font-family: "Open Sans", "Liberation Sans", sans-serif; font-size: 13px; color: #424242;
}
.live-img { width: 14px; height: 12px; color: #222; }
.live-text { margin-left: 18px; }
.live-x { width: 12px; height: 12px; margin-left: auto; color: #a3a3a3; }
.live-send { margin-left: 28px; font-weight: 600; color: #4aa07f; }

/* right */
.parts { height: 181px; flex: none; border-bottom: 1px solid #cfcfcf; margin-left: 1px; }
.panel-title-r { padding-left: 16px; }
.right-search { margin: 0 15px 8px 16px; width: 268px; }
.tree-wrap { height: 96px; display: flex; overflow: hidden; }
.tree { flex: 1; min-width: 0; padding-top: 1px; color: #3d4652; }
.tree-row { height: 28px; display: flex; align-items: center; white-space: nowrap; }
.tree-root { padding-left: 32px; }
.tree-chev { width: 12px; height: 12px; margin-right: 9px; color: #39414d; }
.tree-sel { margin: 0 4px; padding-left: 65px; background: #eef0f2; border-radius: 3px; color: #4f5fff; }
.tree-child { padding-left: 69px; }
.pill { width: 43px; height: 16px; margin-right: 5px; border: 1px solid #6b7280; border-radius: 8px; font-size: 12px; line-height: 15px; letter-spacing: .5px; text-align: center; color: #7a8794; }
.pill-sel { border-color: #4f5fff; color: #5a68ff; }

.props { flex: 1; min-height: 0; display: flex; flex-direction: column; margin-left: 1px; }
.props-title { height: 40px; padding: 12px 0 0 16px; }
.props .right-search { margin-bottom: 8px; }
.props-wrap { height: 642px; display: flex; overflow: hidden; }
.props-list { width: 283px; flex: none; overflow: hidden; }
.p-head { height: 38px; display: flex; align-items: center; padding-left: 18px; font-weight: 500; color: #1f2630; position: relative; }
.p-head svg:first-child { width: 12px; height: 12px; margin-right: 6px; color: #222; }
.p-head-first { height: 37px; font-weight: 400; }
.p-head.p-rule { height: 39px; font-weight: 400; }
.p-rule { border-bottom: 1px solid #ececec; }
.p-rule-gap { height: 9px; }
.p-head-m { height: 36px; }
.p-head.p-head-pad { height: 38px; }
.more { position: absolute; left: 245px; top: 9px; width: 22px; height: 22px; background: #e8ecff; border-radius: 4px; color: #6a4cff; font-size: 12px; line-height: 20px; text-align: center; }
.more-dot { position: absolute; right: -1px; top: -2px; width: 6px; height: 6px; border-radius: 50%; background: #3d5afe; }
.margin-ico { width: 15px; height: 15px; margin-left: auto; margin-right: 19px; }
.field { display: flex; align-items: center; height: 28px; padding-left: 16px; }
.field-first { margin-top: 5px; }
.field-next { margin-top: 8px; }
.field-full { margin-top: 6px; }
.field-gap { margin-top: 8px; }
.f-ico { flex: none; }
.f-ico-w { width: 16px; height: 8px; margin-right: 8px; }
.f-ico-h { width: 8px; height: 16px; margin: 0 12px 0 4px; }
.f-ico-g { width: 14px; height: 14px; margin: 0 9px 0 1px; }
.select { height: 28px; display: flex; align-items: center; justify-content: space-between; flex: 1; margin-right: 16px; padding: 0 8px 0 9px; border: 1px solid #e4e4e4; border-radius: 4px; color: #5a6270; }
.select svg { width: 12px; height: 12px; color: #39414d; }
.select-ph { color: #9aa0a8; }
.p-label { height: 18px; line-height: 18px; padding-left: 16px; color: #5a6270; }
.p-label-display { margin-top: 3px; }
.opts { display: flex; padding-left: 16px; }
.opts-display { margin-top: 9px; }
.opts-just { margin-top: 10px; }
.opt { width: 50px; height: 26px; display: flex; align-items: center; justify-content: center; }
.opt svg { width: 15px; height: 13px; }
.opt-on { background: #e8ecff; }
.p-label-dir { margin-top: 7px; }
.dir { display: flex; align-items: center; margin-top: 10px; padding-left: 17px; }
.dir-btn { width: 96px; height: 26px; line-height: 26px; text-align: center; color: #3d4652; }
.dir-on { background: #e8ecff; color: #4f5fff; border-radius: 2px; }
.dir-swap { width: 16px; height: 12px; margin-left: 26px; }
.p-label-gap { margin-top: 8px; }
.p-label-just { margin-top: 6px; }
.p-label-align { margin-top: 6px; }
```
